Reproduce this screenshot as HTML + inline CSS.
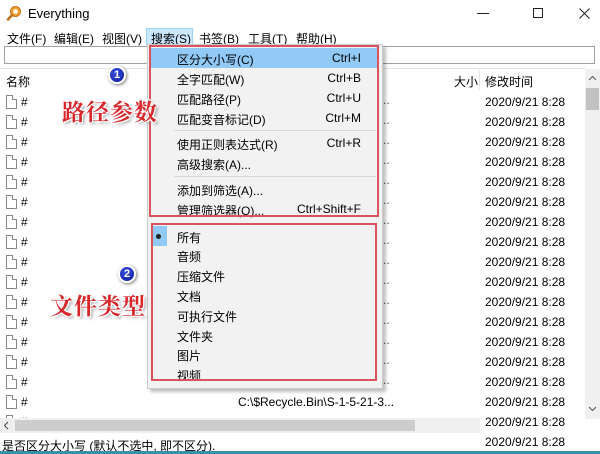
<!DOCTYPE html>
<html><head><meta charset="utf-8">
<style>
*{margin:0;padding:0;box-sizing:border-box}
body{width:600px;height:454px;overflow:hidden;background:#fff;font-family:"Liberation Sans","Noto Sans CJK SC",sans-serif;font-size:12px;color:#000;position:relative}
.a{position:absolute;white-space:nowrap}
.row{position:absolute;left:0;width:585px;height:20px}
.fi{position:absolute;left:6px;top:3px;width:11px;height:14px;border:1px solid #888;background:#fff}
.fi:after{content:"";position:absolute;right:-1px;top:-1px;width:4px;height:4px;background:#fff;border-left:1px solid #888;border-bottom:1px solid #888}
.mi{position:absolute;left:177px;font-size:12px}
.sc{position:absolute;right:239px;font-size:12px}
.ann{position:absolute;font-size:23px;font-weight:bold;color:#d8262a;font-family:"Noto Serif CJK SC","Noto Sans CJK SC",serif;text-shadow:0 0 2px #fff,0 0 2px #fff,1px 1px 0 #fff,-1px -1px 0 #fff,1px -1px 0 #fff,-1px 1px 0 #fff,2px 2px 3px #888;letter-spacing:1px}
.bd{position:absolute;width:18px;height:18px;border-radius:50%;background:radial-gradient(circle at 40% 35%,#3a4fe0,#0a1a9a);border:2px solid #fff;box-shadow:1px 1px 3px #777;color:#fff;font-size:11px;font-weight:bold;text-align:center;line-height:14px}
</style></head><body>
<div class="a" style="left:6px;top:5px;width:16px;height:16px">
<svg width="16" height="16" viewBox="0 0 16 16"><circle cx="9.5" cy="6.5" r="5" fill="#f0a030" stroke="#c0701a"/><circle cx="9.5" cy="6.5" r="2.3" fill="#fff"/><path d="M6 10 L2 14.5" stroke="#c0701a" stroke-width="2.5" stroke-linecap="round"/></svg></div>
<div class="a" style="left:28px;top:6px;font-size:13px">Everything</div>
<div class="a" style="left:477px;top:13px;width:12px;height:1px;background:#222"></div>
<div class="a" style="left:533px;top:8px;width:10px;height:10px;border:1px solid #222"></div>
<svg class="a" style="left:579px;top:8px" width="11" height="11"><path d="M0.5 0.5L10.5 10.5M10.5 0.5L0.5 10.5" stroke="#222" stroke-width="1"/></svg>
<div class="a" style="left:146px;top:28px;width:47px;height:17px;background:#cce8ff;border:1px solid #99d1ff"></div>
<div class="a" style="left:7px;top:30px">文件(F)</div>
<div class="a" style="left:54px;top:30px">编辑(E)</div>
<div class="a" style="left:102px;top:30px">视图(V)</div>
<div class="a" style="left:151px;top:30px">搜索(S)</div>
<div class="a" style="left:199px;top:30px">书签(B)</div>
<div class="a" style="left:248px;top:30px">工具(T)</div>
<div class="a" style="left:296px;top:30px">帮助(H)</div>
<div class="a" style="left:4px;top:46px;width:591px;height:18px;border:1px solid #a0a0a0"></div>
<div class="a" style="left:0;top:68px;width:585px;height:1px;background:#e5e5e5"></div>
<div class="a" style="left:6px;top:73px">名称</div>
<div class="a" style="left:454px;top:73px">大小</div>
<div class="a" style="left:479px;top:70px;width:1px;height:20px;background:#e5e5e5"></div>
<div class="a" style="left:485px;top:73px">修改时间</div>
<div id="rows"></div>
<div class="a" style="left:585px;top:69px;width:15px;height:350px;background:#f0f0f0"></div>
<svg class="a" style="left:588px;top:75px" width="9" height="6"><path d="M1 5L4.5 1.5L8 5" stroke="#555" fill="none"/></svg>
<div class="a" style="left:586px;top:88px;width:13px;height:22px;background:#c2c2c2"></div>
<svg class="a" style="left:588px;top:406px" width="9" height="6"><path d="M1 1L4.5 4.5L8 1" stroke="#555" fill="none"/></svg>
<div class="a" style="left:0;top:418px;width:480px;height:15px;background:#f0f0f0"></div>
<div class="a" style="left:15px;top:420px;width:400px;height:11px;background:#cdcdcd"></div>
<svg class="a" style="left:3px;top:421px" width="6" height="9"><path d="M5 1L1.5 4.5L5 8" stroke="#444" fill="none"/></svg>
<div class="a" style="left:0;top:433px;width:480px;height:18px;background:#fff"></div>
<div class="a" style="left:2px;top:437px">是否区分大小写 (默认不选中, 即不区分).</div>
<div class="a" style="left:0;top:451px;width:600px;height:3px;background:#3c8fa8"></div>
<div class="a" style="left:147px;top:44px;width:236px;height:345px;background:#f2f2f2;border:1px solid #ccc;box-shadow:3px 3px 3px rgba(0,0,0,0.25)"></div>
<div class="a" style="left:151px;top:48px;width:226px;height:20px;background:#91c9f7"></div>
<div class="mi" style="top:51px">区分大小写(C)</div><div class="sc" style="top:51px">Ctrl+I</div>
<div class="mi" style="top:71px">全字匹配(W)</div><div class="sc" style="top:71px">Ctrl+B</div>
<div class="mi" style="top:91px">匹配路径(P)</div><div class="sc" style="top:91px">Ctrl+U</div>
<div class="mi" style="top:111px">匹配变音标记(D)</div><div class="sc" style="top:111px">Ctrl+M</div>
<div class="a" style="left:174px;top:130px;width:202px;height:1px;background:#d7d7d7"></div>
<div class="mi" style="top:136px">使用正则表达式(R)</div><div class="sc" style="top:136px">Ctrl+R</div>
<div class="mi" style="top:156px">高级搜索(A)...</div>
<div class="a" style="left:174px;top:176px;width:202px;height:1px;background:#d7d7d7"></div>
<div class="mi" style="top:182px">添加到筛选(A)...</div>
<div class="mi" style="top:202px">管理筛选器(O)...</div><div class="sc" style="top:202px">Ctrl+Shift+F</div>
<div class="a" style="left:149px;top:45px;width:230px;height:172px;border:2px solid #d9545e"></div>
<div class="a" style="left:151px;top:226px;width:16px;height:20px;background:#91c9f7"></div>
<div class="a" style="left:156px;top:234px;width:5px;height:5px;border-radius:50%;background:#222"></div>
<div class="mi" style="top:229px">所有</div>
<div class="mi" style="top:248px">音频</div>
<div class="mi" style="top:268px">压缩文件</div>
<div class="mi" style="top:288px">文档</div>
<div class="mi" style="top:308px">可执行文件</div>
<div class="mi" style="top:328px">文件夹</div>
<div class="mi" style="top:347px">图片</div>
<div class="mi" style="top:367px">视频</div>
<div class="a" style="left:151px;top:223px;width:226px;height:158px;border:2px solid #d9545e"></div>
<div class="bd" style="left:108px;top:66px">1</div>
<div class="ann" style="left:62px;top:94px">路径参数</div>
<div class="bd" style="left:118px;top:265px">2</div>
<div class="ann" style="left:50px;top:288px">文件类型</div>
<script>
var h='';
for(var i=0;i<18;i++){
 var y=92+i*20;
 h+='<div class="row" style="top:'+y+'px">';
 if(y<415){h+='<div class="fi"></div><div class="a" style="left:21px;top:3px">#</div>';}
 if(i<15)h+='<div class="a" style="left:383px;top:1px;color:#555">..</div>';
 if(i==15)h+='<div class="a" style="left:238px;top:3px">C:\\$Recycle.Bin\\S-1-5-21-3...</div>';
 h+='<div class="a" style="left:485px;top:3px">2020/9/21 8:28</div></div>';
}
document.getElementById('rows').innerHTML=h;
</script>
</body></html>
